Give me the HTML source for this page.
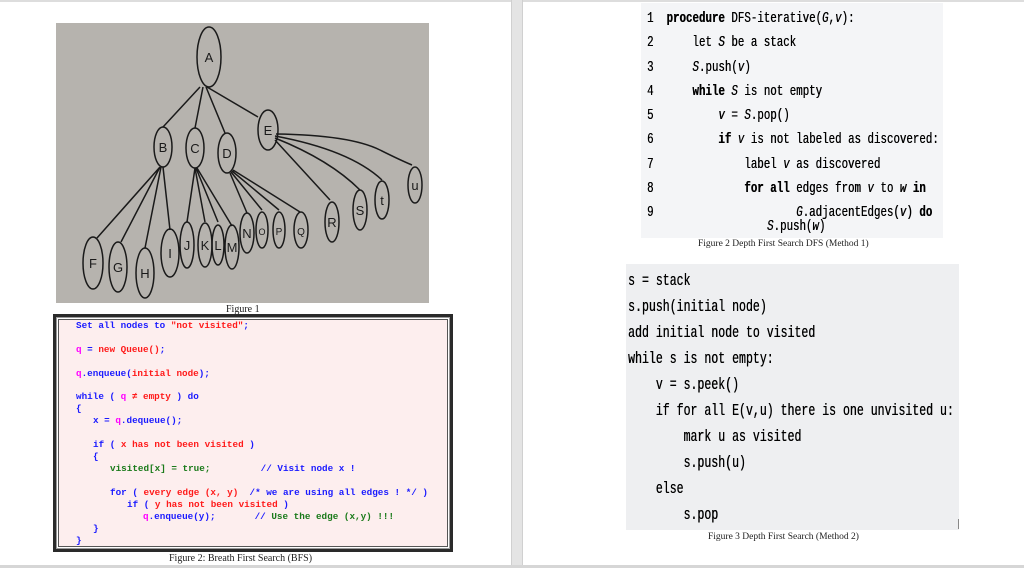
<!DOCTYPE html>
<html><head><meta charset="utf-8"><style>
body{margin:0;width:1024px;height:568px;background:#fff;position:relative;overflow:hidden;font-family:"Liberation Serif",serif}
.a{position:absolute}
.cap{position:absolute;font-size:10px;color:#222;white-space:nowrap}
.bfs{position:absolute;left:53px;top:314px;width:394px;height:232px;border:3px solid #2a2a2a;background:#fdeeee;box-shadow:inset 0 0 0 1px #999,inset 0 0 0 2px #fff,inset 0 0 0 3px #555}
.bl{position:absolute;font-family:"Liberation Mono",monospace;font-weight:bold;font-size:9.3px;white-space:pre;color:#1a1aff}
.r{color:#ff1a1a}.m{color:#f0f}.g{color:#1a7a1a}.b{color:#1a1aff}
.cd{position:absolute;font-family:"Liberation Mono",monospace;white-space:pre;color:#000;transform-origin:0 0;text-shadow:0.4px 0 0 #000}
.cd b{font-weight:bold}
</style></head><body>
<div class="a" style="left:0;top:0;width:1024px;height:2px;background:#ddd"></div>
<div class="a" style="left:511px;top:0;width:12px;height:568px;background:#e4e4e4;border-left:1px solid #d0d0d0;border-right:1px solid #d0d0d0;box-sizing:border-box"></div>
<div class="a" style="left:0;top:565px;width:1024px;height:3px;background:#d6d6d6"></div>

<svg class="a" style="left:56px;top:23px" width="373" height="280" viewBox="56 23 373 280">
<rect x="56" y="23" width="373" height="280" fill="#b6b3ae"/>
<g stroke="#1a1a1a" stroke-width="1.5" fill="none">
<path d="M200 87 L163 127 M203 87 L195 128 M206 87 L225 133 M207 87 L258 117"/>
<path d="M160 167 L97 238 M160 167 L121 242 M161 167 L145 248 M163 167 L170 230"/>
<path d="M195 168 L187 222 M195 168 L205 222 M196 168 L218 222 M197 168 L232 226"/>
<path d="M230 173 L247 213 M231 172 L262 210 M232 171 L279 210 M233 170 L300 212"/>
<path d="M275 140 L330 200 M275 138 Q330 160 360 190 M275 136 Q350 150 382 180 M276 134 Q350 135 380 150 Q400 160 412 165"/>
<ellipse cx="209" cy="57" rx="12" ry="30"/>
<ellipse cx="163" cy="147" rx="9" ry="20"/>
<ellipse cx="195" cy="148" rx="9" ry="20"/>
<ellipse cx="227" cy="153" rx="9" ry="20"/>
<ellipse cx="268" cy="130" rx="10" ry="20"/>
<ellipse cx="93" cy="263" rx="10" ry="26"/>
<ellipse cx="118" cy="267" rx="9" ry="25"/>
<ellipse cx="145" cy="273" rx="9" ry="25"/>
<ellipse cx="170" cy="253" rx="9" ry="24"/>
<ellipse cx="187" cy="245" rx="7" ry="23"/>
<ellipse cx="205" cy="245" rx="7" ry="22"/>
<ellipse cx="218" cy="245" rx="6" ry="20"/>
<ellipse cx="232" cy="247" rx="7" ry="22"/>
<ellipse cx="247" cy="233" rx="7" ry="20"/>
<ellipse cx="262" cy="230" rx="6" ry="18"/>
<ellipse cx="279" cy="230" rx="6" ry="18"/>
<ellipse cx="301" cy="230" rx="7" ry="18"/>
<ellipse cx="332" cy="222" rx="7" ry="20"/>
<ellipse cx="360" cy="210" rx="7" ry="20"/>
<ellipse cx="382" cy="200" rx="7" ry="19"/>
<ellipse cx="415" cy="185" rx="7" ry="18"/>
</g>
<g font-family="Liberation Sans" font-size="13" fill="#1a1a1a" text-anchor="middle">
<text x="209" y="62">A</text><text x="163" y="152">B</text><text x="195" y="153">C</text><text x="227" y="158">D</text><text x="268" y="135">E</text>
<text x="93" y="268">F</text><text x="118" y="272">G</text><text x="145" y="278">H</text><text x="170" y="258">I</text><text x="187" y="250">J</text><text x="205" y="250">K</text><text x="218" y="250">L</text><text x="232" y="252">M</text><text x="247" y="238">N</text><text x="262" y="235" font-size="9">O</text><text x="279" y="235" font-size="10">P</text><text x="301" y="235" font-size="10">Q</text><text x="332" y="227">R</text><text x="360" y="215">S</text><text x="382" y="205">t</text><text x="415" y="190">u</text>
</g>
</svg>
<div class="cap" style="left:226px;top:304px">Figure 1</div>

<div class="bfs"></div>
<div class="bl" style="left:76px;top:320px">Set all nodes to <span class="r">"not visited"</span>;</div>
<div class="bl" style="left:76px;top:344px"><span class="m">q</span> = <span class="r">new Queue()</span>;</div>
<div class="bl" style="left:76px;top:368px"><span class="m">q</span>.enqueue(<span class="r">initial node</span>);</div>
<div class="bl" style="left:76px;top:391px">while ( <span class="m">q</span> <span class="r">≠ empty</span> ) do</div>
<div class="bl" style="left:76px;top:403px">{</div>
<div class="bl" style="left:93px;top:415px">x = <span class="m">q</span>.dequeue();</div>
<div class="bl" style="left:93px;top:439px">if ( <span class="r">x has not been visited</span> )</div>
<div class="bl" style="left:93px;top:451px">{</div>
<div class="bl" style="left:110px;top:463px"><span class="g">visited[x] = true;</span>         // Visit node x !</div>
<div class="bl" style="left:110px;top:487px">for ( <span class="r">every edge (x, y)</span>  /* we are using all edges ! */ )</div>
<div class="bl" style="left:127px;top:499px">if ( <span class="r">y has not been visited</span> )</div>
<div class="bl" style="left:143px;top:511px"><span class="m">q</span>.enqueue(y);       // <span class="g">Use the edge (x,y) !!!</span></div>
<div class="bl" style="left:93px;top:523px">}</div>
<div class="bl" style="left:76px;top:535px">}</div>
<div class="cap" style="left:169px;top:553px">Figure 2: Breath First Search (BFS)</div>

<div class="a" style="left:641px;top:3px;width:302px;height:235px;background:#f4f5f7"></div>
<div class="cd" style="left:647px;top:7px;font-size:15px;line-height:24.3px;transform:scaleX(0.72)">1  <b>procedure</b> DFS-iterative(<i>G</i>,<i>v</i>):
2      let <i>S</i> be a stack
3      <i>S</i>.push(<i>v</i>)
4      <b>while</b> <i>S</i> is not empty
5          <i>v</i> = <i>S</i>.pop()
6          <b>if</b> <i>v</i> is not labeled as discovered:
7              label <i>v</i> as discovered
8              <b>for all</b> edges from <i>v</i> to <i>w</i> <b>in</b>
9                      <i>G</i>.adjacentEdges(<i>v</i>) <b>do</b></div>
<div class="cd" style="left:767px;top:218px;font-size:15px;line-height:18px;transform:scaleX(0.72)"><i>S</i>.push(<i>w</i>)</div>
<div class="cap" style="left:698px;top:239px;font-size:9.5px">Figure 2 Depth First Search DFS (Method 1)</div>

<div class="a" style="left:626px;top:264px;width:333px;height:266px;background:#eeeff1"></div>
<div class="a" style="left:958px;top:519px;width:1px;height:10px;background:#888"></div>
<div class="cd" style="left:628px;top:268px;font-size:16.5px;line-height:26px;transform:scaleX(0.7)">s = stack
s.push(initial node)
add initial node to visited
while s is not empty:
    v = s.peek()
    if for all E(v,u) there is one unvisited u:
        mark u as visited
        s.push(u)
    else
        s.pop</div>
<div class="cap" style="left:708px;top:532px;font-size:9.5px">Figure 3 Depth First Search (Method 2)</div>
</body></html>
